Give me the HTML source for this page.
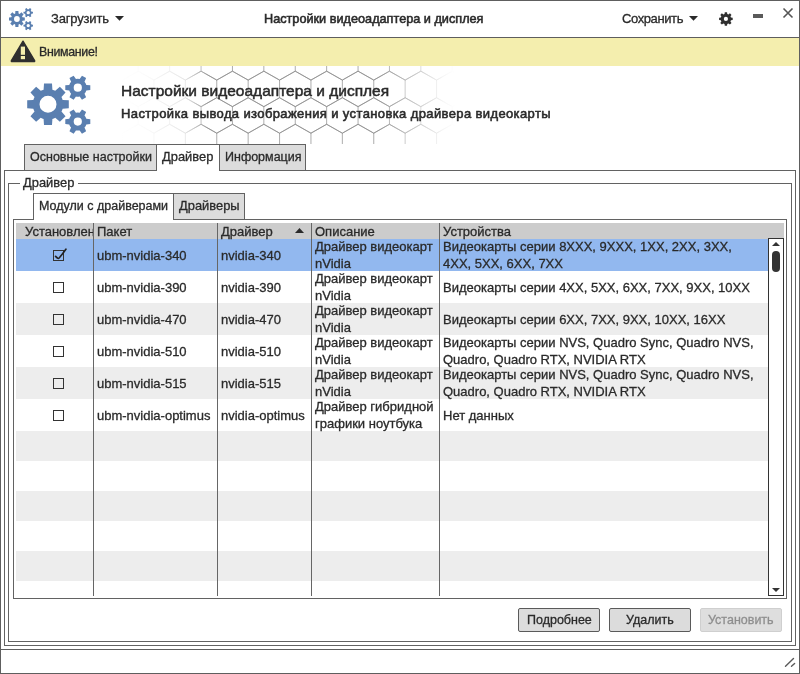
<!DOCTYPE html>
<html><head><meta charset="utf-8">
<style>
*{box-sizing:border-box;margin:0;padding:0}
html,body{width:800px;height:674px;overflow:hidden;background:#fff}
body{font-family:"Liberation Sans",sans-serif;font-size:12.5px;color:#2a2a2a;position:relative;-webkit-text-stroke:0.3px currentColor}
.a{position:absolute}
.t{position:absolute;white-space:nowrap;line-height:1;will-change:transform}
.sb{-webkit-text-stroke:0.55px #2a2a2a}
.bd{border:1px solid #626262}
</style></head><body>
<!-- window border -->
<div class="a" style="left:0;top:0;width:800px;height:674px;border:1px solid #5e5e5e"></div>

<!-- headerbar -->
<div class="a" style="left:1px;top:37px;width:798px;height:1px;background:#5e5e5e"></div>
<svg class="a" style="left:0;top:0" width="800" height="40"><path fill-rule="evenodd" fill="#2f2f2f" d="M730.92 17.60L732.70 17.80L732.70 20.10L730.92 20.30A5.20 5.20 0 0 1 730.41 21.55L730.41 21.55L731.52 22.95L729.90 24.57L728.50 23.46A5.20 5.20 0 0 1 727.25 23.97L727.25 23.97L727.05 25.75L724.75 25.75L724.55 23.97A5.20 5.20 0 0 1 723.30 23.46L723.30 23.46L721.90 24.57L720.28 22.95L721.39 21.55A5.20 5.20 0 0 1 720.88 20.30L720.88 20.30L719.10 20.10L719.10 17.80L720.88 17.60A5.20 5.20 0 0 1 721.39 16.35L721.39 16.35L720.28 14.95L721.90 13.33L723.30 14.44A5.20 5.20 0 0 1 724.55 13.93L724.55 13.93L724.75 12.15L727.05 12.15L727.25 13.93A5.20 5.20 0 0 1 728.50 14.44L728.50 14.44L729.90 13.33L731.52 14.95L730.41 16.35A5.20 5.20 0 0 1 730.92 17.60ZM728.00 18.95A2.10 2.10 0 1 0 723.80 18.95A2.10 2.10 0 1 0 728.00 18.95Z"/></svg>
<svg class="a" style="left:0;top:0" width="100" height="140"><path fill-rule="evenodd" fill="#5a7fb0" d="M62.65 99.90L68.80 100.30L68.80 108.30L62.65 108.70A15.30 15.30 0 0 1 61.47 111.55L61.47 111.55L65.54 116.18L59.88 121.84L55.25 117.77A15.30 15.30 0 0 1 52.40 118.95L52.40 118.95L52.00 125.10L44.00 125.10L43.60 118.95A15.30 15.30 0 0 1 40.75 117.77L40.75 117.77L36.12 121.84L30.46 116.18L34.53 111.55A15.30 15.30 0 0 1 33.35 108.70L33.35 108.70L27.20 108.30L27.20 100.30L33.35 99.90A15.30 15.30 0 0 1 34.53 97.05L34.53 97.05L30.46 92.42L36.12 86.76L40.75 90.83A15.30 15.30 0 0 1 43.60 89.65L43.60 89.65L44.00 83.50L52.00 83.50L52.40 89.65A15.30 15.30 0 0 1 55.25 90.83L55.25 90.83L59.88 86.76L65.54 92.42L61.47 97.05A15.30 15.30 0 0 1 62.65 99.90ZM56.50 104.30A8.50 8.50 0 1 0 39.50 104.30A8.50 8.50 0 1 0 56.50 104.30ZM86.35 84.90L90.30 85.30L90.30 90.10L86.35 90.50A9.00 9.00 0 0 1 84.50 93.71L84.50 93.71L86.13 97.33L81.97 99.73L79.65 96.51A9.00 9.00 0 0 1 75.95 96.51L75.95 96.51L73.63 99.73L69.47 97.33L71.10 93.71A9.00 9.00 0 0 1 69.25 90.50L69.25 90.50L65.30 90.10L65.30 85.30L69.25 84.90A9.00 9.00 0 0 1 71.10 81.69L71.10 81.69L69.47 78.07L73.63 75.67L75.95 78.89A9.00 9.00 0 0 1 79.65 78.89L79.65 78.89L81.97 75.67L86.13 78.07L84.50 81.69A9.00 9.00 0 0 1 86.35 84.90ZM81.90 87.70A4.10 4.10 0 1 0 73.70 87.70A4.10 4.10 0 1 0 81.90 87.70ZM86.35 118.80L90.30 119.20L90.30 124.00L86.35 124.40A9.00 9.00 0 0 1 84.50 127.61L84.50 127.61L86.13 131.23L81.97 133.63L79.65 130.41A9.00 9.00 0 0 1 75.95 130.41L75.95 130.41L73.63 133.63L69.47 131.23L71.10 127.61A9.00 9.00 0 0 1 69.25 124.40L69.25 124.40L65.30 124.00L65.30 119.20L69.25 118.80A9.00 9.00 0 0 1 71.10 115.59L71.10 115.59L69.47 111.97L73.63 109.57L75.95 112.79A9.00 9.00 0 0 1 79.65 112.79L79.65 112.79L81.97 109.57L86.13 111.97L84.50 115.59A9.00 9.00 0 0 1 86.35 118.80ZM81.90 121.60A4.10 4.10 0 1 0 73.70 121.60A4.10 4.10 0 1 0 81.90 121.60Z"/><path fill-rule="evenodd" fill="#5a7fb0" d="M22.47 17.33L24.80 17.48L24.80 20.52L22.47 20.67A5.81 5.81 0 0 1 22.02 21.76L22.02 21.76L23.56 23.51L21.41 25.66L19.66 24.12A5.81 5.81 0 0 1 18.57 24.57L18.57 24.57L18.42 26.90L15.38 26.90L15.23 24.57A5.81 5.81 0 0 1 14.14 24.12L14.14 24.12L12.39 25.66L10.24 23.51L11.78 21.76A5.81 5.81 0 0 1 11.33 20.67L11.33 20.67L9.00 20.52L9.00 17.48L11.33 17.33A5.81 5.81 0 0 1 11.78 16.24L11.78 16.24L10.24 14.49L12.39 12.34L14.14 13.88A5.81 5.81 0 0 1 15.23 13.43L15.23 13.43L15.38 11.10L18.42 11.10L18.57 13.43A5.81 5.81 0 0 1 19.66 13.88L19.66 13.88L21.41 12.34L23.56 14.49L22.02 16.24A5.81 5.81 0 0 1 22.47 17.33ZM19.79 19.00A2.89 2.89 0 1 0 14.01 19.00A2.89 2.89 0 1 0 19.79 19.00ZM31.47 11.63L32.97 11.78L32.97 13.60L31.47 13.76A3.42 3.42 0 0 1 30.77 14.97L30.77 14.97L31.39 16.35L29.81 17.26L28.93 16.04A3.42 3.42 0 0 1 27.52 16.04L27.52 16.04L26.64 17.26L25.06 16.35L25.68 14.97A3.42 3.42 0 0 1 24.97 13.76L24.97 13.76L23.47 13.60L23.47 11.78L24.97 11.63A3.42 3.42 0 0 1 25.68 10.41L25.68 10.41L25.06 9.03L26.64 8.12L27.52 9.35A3.42 3.42 0 0 1 28.93 9.35L28.93 9.35L29.81 8.12L31.39 9.03L30.77 10.41A3.42 3.42 0 0 1 31.47 11.63ZM29.90 12.69A1.67 1.67 0 1 0 26.55 12.69A1.67 1.67 0 1 0 29.90 12.69ZM31.47 24.51L32.97 24.66L32.97 26.49L31.47 26.64A3.42 3.42 0 0 1 30.77 27.86L30.77 27.86L31.39 29.23L29.81 30.14L28.93 28.92A3.42 3.42 0 0 1 27.52 28.92L27.52 28.92L26.64 30.14L25.06 29.23L25.68 27.86A3.42 3.42 0 0 1 24.97 26.64L24.97 26.64L23.47 26.49L23.47 24.66L24.97 24.51A3.42 3.42 0 0 1 25.68 23.29L25.68 23.29L25.06 21.92L26.64 21.00L27.52 22.23A3.42 3.42 0 0 1 28.93 22.23L28.93 22.23L29.81 21.00L31.39 21.92L30.77 23.29A3.42 3.42 0 0 1 31.47 24.51ZM29.90 25.57A1.67 1.67 0 1 0 26.55 25.57A1.67 1.67 0 1 0 29.90 25.57Z"/></svg>

<div class="t" style="left:51px;top:12px;font-size:13px;letter-spacing:-0.17px">Загрузить</div>
<svg class="a" style="left:115px;top:16px" width="9" height="5"><path d="M0 0H9L4.5 4.7Z" fill="#2a2a2a"/></svg>
<div class="t sb" style="left:264px;top:12.5px;font-size:12.7px">Настройки видеоадаптера и дисплея</div>
<div class="t" style="left:622px;top:12px;font-size:13px;letter-spacing:-0.4px">Сохранить</div>
<svg class="a" style="left:689px;top:16px" width="9" height="5"><path d="M0 0H9L4.5 4.7Z" fill="#2a2a2a"/></svg>

<!-- infobar -->
<div class="a" style="left:1px;top:38px;width:798px;height:28px;background:#f4eeae"></div>
<div class="t" style="left:39px;top:46px;font-size:12.4px;letter-spacing:-0.33px">Внимание!</div>

<!-- header -->
<svg class="a" style="left:0;top:66px" width="800" height="78" viewBox="0 66 800 78">
<defs><linearGradient id="hg" x1="120" y1="0" x2="460" y2="0" gradientUnits="userSpaceOnUse">
<stop offset="0" stop-color="#fff" stop-opacity="0"/>
<stop offset="0.08" stop-color="#fff" stop-opacity="0.03"/>
<stop offset="0.19" stop-color="#fff" stop-opacity="0.15"/>
<stop offset="0.26" stop-color="#fff" stop-opacity="0.65"/>
<stop offset="0.76" stop-color="#fff" stop-opacity="0.65"/>
<stop offset="0.88" stop-color="#fff" stop-opacity="0.3"/>
<stop offset="0.95" stop-color="#fff" stop-opacity="0.06"/>
<stop offset="0.985" stop-color="#fff" stop-opacity="0"/>
</linearGradient><mask id="hm" maskUnits="userSpaceOnUse" x="0" y="66" width="800" height="78"><rect x="0" y="66" width="800" height="78" fill="url(#hg)"/></mask></defs>
<path mask="url(#hm)" d="M91.15 26.9L91.15 44.7M91.15 26.9L106.85 18.0M91.15 44.7L106.85 53.6M91.15 80.0L91.15 97.8M91.15 80.0L106.85 71.1M91.15 97.8L106.85 106.7M91.15 133.1L91.15 150.9M91.15 133.1L106.85 124.2M91.15 150.9L106.85 159.8M106.85 18.0L122.55 26.9M106.85 53.45L106.85 71.25M106.85 53.45L122.55 44.55M106.85 53.6L122.55 44.7M106.85 71.1L122.55 80.0M106.85 71.25L122.55 80.15M106.85 106.55L106.85 124.35M106.85 106.55L122.55 97.65M106.85 106.7L122.55 97.8M106.85 124.2L122.55 133.1M106.85 124.35L122.55 133.25M106.85 159.65L106.85 177.45M106.85 159.65L122.55 150.75M106.85 159.8L122.55 150.9M106.85 177.45L122.55 186.35M122.55 26.9L122.55 44.7M122.55 26.9L138.25 18.0M122.55 44.55L138.25 53.45M122.55 44.7L138.25 53.6M122.55 80.0L122.55 97.8M122.55 80.0L138.25 71.1M122.55 80.15L138.25 71.25M122.55 97.65L138.25 106.55M122.55 97.8L138.25 106.7M122.55 133.1L122.55 150.9M122.55 133.1L138.25 124.2M122.55 133.25L138.25 124.35M122.55 150.75L138.25 159.65M122.55 150.9L138.25 159.8M122.55 186.35L138.25 177.45M138.25 18.0L153.95 26.9M138.25 53.45L138.25 71.25M138.25 53.45L153.95 44.55M138.25 53.6L153.95 44.7M138.25 71.1L153.95 80.0M138.25 71.25L153.95 80.15M138.25 106.55L138.25 124.35M138.25 106.55L153.95 97.65M138.25 106.7L153.95 97.8M138.25 124.2L153.95 133.1M138.25 124.35L153.95 133.25M138.25 159.65L138.25 177.45M138.25 159.65L153.95 150.75M138.25 159.8L153.95 150.9M138.25 177.45L153.95 186.35M153.95 26.9L153.95 44.7M153.95 26.9L169.65 18.0M153.95 44.55L169.65 53.45M153.95 44.7L169.65 53.6M153.95 80.0L153.95 97.8M153.95 80.0L169.65 71.1M153.95 80.15L169.65 71.25M153.95 97.65L169.65 106.55M153.95 97.8L169.65 106.7M153.95 133.1L153.95 150.9M153.95 133.1L169.65 124.2M153.95 133.25L169.65 124.35M153.95 150.75L169.65 159.65M153.95 150.9L169.65 159.8M153.95 186.35L169.65 177.45M169.65 18.0L185.35 26.9M169.65 53.45L169.65 71.25M169.65 53.45L185.35 44.55M169.65 53.6L185.35 44.7M169.65 71.1L185.35 80.0M169.65 71.25L185.35 80.15M169.65 106.55L169.65 124.35M169.65 106.55L185.35 97.65M169.65 106.7L185.35 97.8M169.65 124.2L185.35 133.1M169.65 124.35L185.35 133.25M169.65 159.65L169.65 177.45M169.65 159.65L185.35 150.75M169.65 159.8L185.35 150.9M169.65 177.45L185.35 186.35M185.35 26.9L185.35 44.7M185.35 26.9L201.05 18.0M185.35 44.55L201.05 53.45M185.35 44.7L201.05 53.6M185.35 80.0L185.35 97.8M185.35 80.0L201.05 71.1M185.35 80.15L201.05 71.25M185.35 97.65L201.05 106.55M185.35 97.8L201.05 106.7M185.35 133.1L185.35 150.9M185.35 133.1L201.05 124.2M185.35 133.25L201.05 124.35M185.35 150.75L201.05 159.65M185.35 150.9L201.05 159.8M185.35 186.35L201.05 177.45M201.05 18.0L216.75 26.9M201.05 53.45L201.05 71.25M201.05 53.45L216.75 44.55M201.05 53.6L216.75 44.7M201.05 71.1L216.75 80.0M201.05 71.25L216.75 80.15M201.05 106.55L201.05 124.35M201.05 106.55L216.75 97.65M201.05 106.7L216.75 97.8M201.05 124.2L216.75 133.1M201.05 124.35L216.75 133.25M201.05 159.65L201.05 177.45M201.05 159.65L216.75 150.75M201.05 159.8L216.75 150.9M201.05 177.45L216.75 186.35M216.75 26.9L216.75 44.7M216.75 26.9L232.45 18.0M216.75 44.55L232.45 53.45M216.75 44.7L232.45 53.6M216.75 80.0L216.75 97.8M216.75 80.0L232.45 71.1M216.75 80.15L232.45 71.25M216.75 97.65L232.45 106.55M216.75 97.8L232.45 106.7M216.75 133.1L216.75 150.9M216.75 133.1L232.45 124.2M216.75 133.25L232.45 124.35M216.75 150.75L232.45 159.65M216.75 150.9L232.45 159.8M216.75 186.35L232.45 177.45M232.45 18.0L248.15 26.9M232.45 53.45L232.45 71.25M232.45 53.45L248.15 44.55M232.45 53.6L248.15 44.7M232.45 71.1L248.15 80.0M232.45 71.25L248.15 80.15M232.45 106.55L232.45 124.35M232.45 106.55L248.15 97.65M232.45 106.7L248.15 97.8M232.45 124.2L248.15 133.1M232.45 124.35L248.15 133.25M232.45 159.65L232.45 177.45M232.45 159.65L248.15 150.75M232.45 159.8L248.15 150.9M232.45 177.45L248.15 186.35M248.15 26.9L248.15 44.7M248.15 26.9L263.85 18.0M248.15 44.55L263.85 53.45M248.15 44.7L263.85 53.6M248.15 80.0L248.15 97.8M248.15 80.0L263.85 71.1M248.15 80.15L263.85 71.25M248.15 97.65L263.85 106.55M248.15 97.8L263.85 106.7M248.15 133.1L248.15 150.9M248.15 133.1L263.85 124.2M248.15 133.25L263.85 124.35M248.15 150.75L263.85 159.65M248.15 150.9L263.85 159.8M248.15 186.35L263.85 177.45M263.85 18.0L279.55 26.9M263.85 53.45L263.85 71.25M263.85 53.45L279.55 44.55M263.85 53.6L279.55 44.7M263.85 71.1L279.55 80.0M263.85 71.25L279.55 80.15M263.85 106.55L263.85 124.35M263.85 106.55L279.55 97.65M263.85 106.7L279.55 97.8M263.85 124.2L279.55 133.1M263.85 124.35L279.55 133.25M263.85 159.65L263.85 177.45M263.85 159.65L279.55 150.75M263.85 159.8L279.55 150.9M263.85 177.45L279.55 186.35M279.55 26.9L279.55 44.7M279.55 26.9L295.25 18.0M279.55 44.55L295.25 53.45M279.55 44.7L295.25 53.6M279.55 80.0L279.55 97.8M279.55 80.0L295.25 71.1M279.55 80.15L295.25 71.25M279.55 97.65L295.25 106.55M279.55 97.8L295.25 106.7M279.55 133.1L279.55 150.9M279.55 133.1L295.25 124.2M279.55 133.25L295.25 124.35M279.55 150.75L295.25 159.65M279.55 150.9L295.25 159.8M279.55 186.35L295.25 177.45M295.25 18.0L310.95 26.9M295.25 53.45L295.25 71.25M295.25 53.45L310.95 44.55M295.25 53.6L310.95 44.7M295.25 71.1L310.95 80.0M295.25 71.25L310.95 80.15M295.25 106.55L295.25 124.35M295.25 106.55L310.95 97.65M295.25 106.7L310.95 97.8M295.25 124.2L310.95 133.1M295.25 124.35L310.95 133.25M295.25 159.65L295.25 177.45M295.25 159.65L310.95 150.75M295.25 159.8L310.95 150.9M295.25 177.45L310.95 186.35M310.95 26.9L310.95 44.7M310.95 26.9L326.65 18.0M310.95 44.55L326.65 53.45M310.95 44.7L326.65 53.6M310.95 80.0L310.95 97.8M310.95 80.0L326.65 71.1M310.95 80.15L326.65 71.25M310.95 97.65L326.65 106.55M310.95 97.8L326.65 106.7M310.95 133.1L310.95 150.9M310.95 133.1L326.65 124.2M310.95 133.25L326.65 124.35M310.95 150.75L326.65 159.65M310.95 150.9L326.65 159.8M310.95 186.35L326.65 177.45M326.65 18.0L342.35 26.9M326.65 53.45L326.65 71.25M326.65 53.45L342.35 44.55M326.65 53.6L342.35 44.7M326.65 71.1L342.35 80.0M326.65 71.25L342.35 80.15M326.65 106.55L326.65 124.35M326.65 106.55L342.35 97.65M326.65 106.7L342.35 97.8M326.65 124.2L342.35 133.1M326.65 124.35L342.35 133.25M326.65 159.65L326.65 177.45M326.65 159.65L342.35 150.75M326.65 159.8L342.35 150.9M326.65 177.45L342.35 186.35M342.35 26.9L342.35 44.7M342.35 26.9L358.05 18.0M342.35 44.55L358.05 53.45M342.35 44.7L358.05 53.6M342.35 80.0L342.35 97.8M342.35 80.0L358.05 71.1M342.35 80.15L358.05 71.25M342.35 97.65L358.05 106.55M342.35 97.8L358.05 106.7M342.35 133.1L342.35 150.9M342.35 133.1L358.05 124.2M342.35 133.25L358.05 124.35M342.35 150.75L358.05 159.65M342.35 150.9L358.05 159.8M342.35 186.35L358.05 177.45M358.05 18.0L373.75 26.9M358.05 53.45L358.05 71.25M358.05 53.45L373.75 44.55M358.05 53.6L373.75 44.7M358.05 71.1L373.75 80.0M358.05 71.25L373.75 80.15M358.05 106.55L358.05 124.35M358.05 106.55L373.75 97.65M358.05 106.7L373.75 97.8M358.05 124.2L373.75 133.1M358.05 124.35L373.75 133.25M358.05 159.65L358.05 177.45M358.05 159.65L373.75 150.75M358.05 159.8L373.75 150.9M358.05 177.45L373.75 186.35M373.75 26.9L373.75 44.7M373.75 26.9L389.45 18.0M373.75 44.55L389.45 53.45M373.75 44.7L389.45 53.6M373.75 80.0L373.75 97.8M373.75 80.0L389.45 71.1M373.75 80.15L389.45 71.25M373.75 97.65L389.45 106.55M373.75 97.8L389.45 106.7M373.75 133.1L373.75 150.9M373.75 133.1L389.45 124.2M373.75 133.25L389.45 124.35M373.75 150.75L389.45 159.65M373.75 150.9L389.45 159.8M373.75 186.35L389.45 177.45M389.45 18.0L405.15 26.9M389.45 53.45L389.45 71.25M389.45 53.45L405.15 44.55M389.45 53.6L405.15 44.7M389.45 71.1L405.15 80.0M389.45 71.25L405.15 80.15M389.45 106.55L389.45 124.35M389.45 106.55L405.15 97.65M389.45 106.7L405.15 97.8M389.45 124.2L405.15 133.1M389.45 124.35L405.15 133.25M389.45 159.65L389.45 177.45M389.45 159.65L405.15 150.75M389.45 159.8L405.15 150.9M389.45 177.45L405.15 186.35M405.15 26.9L405.15 44.7M405.15 26.9L420.85 18.0M405.15 44.55L420.85 53.45M405.15 44.7L420.85 53.6M405.15 80.0L405.15 97.8M405.15 80.0L420.85 71.1M405.15 80.15L420.85 71.25M405.15 97.65L420.85 106.55M405.15 97.8L420.85 106.7M405.15 133.1L405.15 150.9M405.15 133.1L420.85 124.2M405.15 133.25L420.85 124.35M405.15 150.75L420.85 159.65M405.15 150.9L420.85 159.8M405.15 186.35L420.85 177.45M420.85 18.0L436.55 26.9M420.85 53.45L420.85 71.25M420.85 53.45L436.55 44.55M420.85 53.6L436.55 44.7M420.85 71.1L436.55 80.0M420.85 71.25L436.55 80.15M420.85 106.55L420.85 124.35M420.85 106.55L436.55 97.65M420.85 106.7L436.55 97.8M420.85 124.2L436.55 133.1M420.85 124.35L436.55 133.25M420.85 159.65L420.85 177.45M420.85 159.65L436.55 150.75M420.85 159.8L436.55 150.9M420.85 177.45L436.55 186.35M436.55 26.9L436.55 44.7M436.55 26.9L452.25 18.0M436.55 44.55L452.25 53.45M436.55 44.7L452.25 53.6M436.55 80.0L436.55 97.8M436.55 80.0L452.25 71.1M436.55 80.15L452.25 71.25M436.55 97.65L452.25 106.55M436.55 97.8L452.25 106.7M436.55 133.1L436.55 150.9M436.55 133.1L452.25 124.2M436.55 133.25L452.25 124.35M436.55 150.75L452.25 159.65M436.55 150.9L452.25 159.8M436.55 186.35L452.25 177.45M452.25 18.0L467.95 26.9M452.25 53.45L452.25 71.25M452.25 53.45L467.95 44.55M452.25 53.6L467.95 44.7M452.25 71.1L467.95 80.0M452.25 71.25L467.95 80.15M452.25 106.55L452.25 124.35M452.25 106.55L467.95 97.65M452.25 106.7L467.95 97.8M452.25 124.2L467.95 133.1M452.25 124.35L467.95 133.25M452.25 159.65L452.25 177.45M452.25 159.65L467.95 150.75M452.25 159.8L467.95 150.9M452.25 177.45L467.95 186.35M467.95 26.9L467.95 44.7M467.95 44.55L483.65 53.45M467.95 80.0L467.95 97.8M467.95 80.15L483.65 71.25M467.95 97.65L483.65 106.55M467.95 133.1L467.95 150.9M467.95 133.25L483.65 124.35M467.95 150.75L483.65 159.65M467.95 186.35L483.65 177.45M483.65 53.45L483.65 71.25M483.65 106.55L483.65 124.35M483.65 159.65L483.65 177.45" stroke="#4a4a4a" stroke-width="0.7" fill="none"/></svg>

<div class="t sb" style="left:121px;top:83px;font-size:15.5px;-webkit-text-stroke:0.5px #2a2a2a">Настройки видеоадаптера и дисплея</div>
<div class="t sb" style="left:121px;top:107px;font-size:13px;letter-spacing:0.38px;-webkit-text-stroke:0.55px #2a2a2a">Настройка вывода изображения и установка драйвера видеокарты</div>

<!-- outer notebook -->
<div class="a bd" style="left:4px;top:170px;width:792px;height:476px"></div>
<div class="a bd" style="left:24px;top:144px;width:133px;height:27px;background:#dcdcdc"></div>
<div class="a" style="left:156px;top:144px;width:64px;height:27px;border:1px solid #626262;border-bottom:none;background:#fff"></div>
<div class="a bd" style="left:219px;top:144px;width:87px;height:27px;background:#dcdcdc"></div>
<div class="t" style="left:30px;top:151px">Основные настройки</div>
<div class="t" style="left:162px;top:151px;font-size:12.9px">Драйвер</div>
<div class="t" style="left:225px;top:151px">Информация</div>

<!-- frame -->
<div class="a bd" style="left:8px;top:183px;width:784px;height:459px"></div>
<div class="a" style="left:20px;top:176px;width:58px;height:14px;background:#fff"></div>
<div class="t" style="left:23px;top:177px;font-size:12.9px">Драйвер</div>

<!-- inner notebook -->
<div class="a bd" style="left:13px;top:219px;width:774px;height:380px"></div>
<div class="a" style="left:33px;top:193px;width:141px;height:27px;border:1px solid #626262;border-bottom:none;background:#fff"></div>
<div class="a bd" style="left:173px;top:193px;width:72px;height:27px;background:#dcdcdc"></div>
<div class="t" style="left:39px;top:200px">Модули с драйверами</div>
<div class="t" style="left:179px;top:200px;font-size:12.9px">Драйверы</div>

<!-- tree --><div class="a" style="left:0;top:0;width:800px;height:674px;font-size:13px">
<div class="a" style="left:16px;top:223px;width:768px;height:16px;background:#cccccc"></div>
<div class="a" style="left:16px;top:239px;width:752px;height:32px;background:#92b8ef"></div>
<div class="a" style="left:16px;top:303px;width:752px;height:32px;background:#ededed"></div>
<div class="a" style="left:16px;top:367px;width:752px;height:32px;background:#ededed"></div>
<div class="a" style="left:16px;top:431px;width:752px;height:30px;background:#ededed"></div>
<div class="a" style="left:16px;top:491px;width:752px;height:30px;background:#ededed"></div>
<div class="a" style="left:16px;top:551px;width:752px;height:30px;background:#ededed"></div>
<div class="a" style="left:93px;top:223px;width:1px;height:373px;background:#666"></div>
<div class="a" style="left:217px;top:223px;width:1px;height:373px;background:#666"></div>
<div class="a" style="left:311px;top:223px;width:1px;height:373px;background:#666"></div>
<div class="a" style="left:439px;top:223px;width:1px;height:373px;background:#666"></div>
<div class="a" style="left:16px;top:223px;width:77px;height:16px;overflow:hidden"><div class="t" style="left:8.5px;top:1.5px">Установлен</div></div>
<div class="t" style="left:97px;top:224.5px">Пакет</div>
<div class="t" style="left:221px;top:224.5px">Драйвер</div>
<div class="t" style="left:315px;top:224.5px">Описание</div>
<div class="t" style="left:443px;top:224.5px">Устройства</div>
<svg class="a" style="left:295px;top:228px" width="9" height="5"><path d="M4.5 0L9 5H0Z" fill="#2a2a2a"/></svg>
<div class="a" style="left:53px;top:250px;width:11px;height:11px;border:1px solid #333"></div>
<svg class="a" style="left:53px;top:246px" width="14" height="15"><path d="M2.6 10.4Q4.6 12.6 5.4 12.5Q6.2 12.4 12.9 3.2" fill="none" stroke="#222" stroke-width="1.7" stroke-linecap="round"/></svg>
<div class="t" style="left:97px;top:248.5px">ubm-nvidia-340</div>
<div class="t" style="left:221px;top:248.5px">nvidia-340</div>
<div class="t" style="left:315px;top:240px">Драйвер видеокарт</div>
<div class="t" style="left:315px;top:256.5px">nVidia</div>
<div class="t" style="left:443px;top:240px">Видеокарты серии 8XXX, 9XXX, 1XX, 2XX, 3XX,</div>
<div class="t" style="left:443px;top:256.5px">4XX, 5XX, 6XX, 7XX</div>
<div class="a" style="left:53px;top:282px;width:11px;height:11px;border:1px solid #333"></div>
<div class="t" style="left:97px;top:280.5px">ubm-nvidia-390</div>
<div class="t" style="left:221px;top:280.5px">nvidia-390</div>
<div class="t" style="left:315px;top:272px">Драйвер видеокарт</div>
<div class="t" style="left:315px;top:288.5px">nVidia</div>
<div class="t" style="left:443px;top:280.5px">Видеокарты серии 4XX, 5XX, 6XX, 7XX, 9XX, 10XX</div>
<div class="a" style="left:53px;top:314px;width:11px;height:11px;border:1px solid #333"></div>
<div class="t" style="left:97px;top:312.5px">ubm-nvidia-470</div>
<div class="t" style="left:221px;top:312.5px">nvidia-470</div>
<div class="t" style="left:315px;top:304px">Драйвер видеокарт</div>
<div class="t" style="left:315px;top:320.5px">nVidia</div>
<div class="t" style="left:443px;top:312.5px">Видеокарты серии 6XX, 7XX, 9XX, 10XX, 16XX</div>
<div class="a" style="left:53px;top:346px;width:11px;height:11px;border:1px solid #333"></div>
<div class="t" style="left:97px;top:344.5px">ubm-nvidia-510</div>
<div class="t" style="left:221px;top:344.5px">nvidia-510</div>
<div class="t" style="left:315px;top:336px">Драйвер видеокарт</div>
<div class="t" style="left:315px;top:352.5px">nVidia</div>
<div class="t" style="left:443px;top:336px">Видеокарты серии NVS, Quadro Sync, Quadro NVS,</div>
<div class="t" style="left:443px;top:352.5px">Quadro, Quadro RTX, NVIDIA RTX</div>
<div class="a" style="left:53px;top:378px;width:11px;height:11px;border:1px solid #333"></div>
<div class="t" style="left:97px;top:376.5px">ubm-nvidia-515</div>
<div class="t" style="left:221px;top:376.5px">nvidia-515</div>
<div class="t" style="left:315px;top:368px">Драйвер видеокарт</div>
<div class="t" style="left:315px;top:384.5px">nVidia</div>
<div class="t" style="left:443px;top:368px">Видеокарты серии NVS, Quadro Sync, Quadro NVS,</div>
<div class="t" style="left:443px;top:384.5px">Quadro, Quadro RTX, NVIDIA RTX</div>
<div class="a" style="left:53px;top:410px;width:11px;height:11px;border:1px solid #333"></div>
<div class="t" style="left:97px;top:408.5px">ubm-nvidia-optimus</div>
<div class="t" style="left:221px;top:408.5px">nvidia-optimus</div>
<div class="t" style="left:315px;top:400px">Драйвер гибридной</div>
<div class="t" style="left:315px;top:416.5px">графики ноутбука</div>
<div class="t" style="left:443px;top:408.5px">Нет данных</div>
<div class="a" style="left:768px;top:238px;width:16px;height:358px;border:1px solid #333;background:#fff"></div>
<svg class="a" style="left:772px;top:242px" width="8" height="4"><path d="M4 0L8 4H0Z" fill="#333"/></svg>
<div class="a" style="left:772px;top:251px;width:8px;height:21px;border-radius:4px;background:#333"></div>
<svg class="a" style="left:772px;top:588px" width="8" height="4"><path d="M0 0H8L4 4Z" fill="#333"/></svg>
</div>

<!-- buttons -->
<div class="a" style="left:518px;top:608px;width:82px;height:24px;border:1px solid #5a5a5a;border-radius:2px;background:#dcdcdc"></div>
<div class="a" style="left:609px;top:608px;width:82px;height:24px;border:1px solid #5a5a5a;border-radius:2px;background:#dcdcdc"></div>
<div class="a" style="left:700px;top:608px;width:82px;height:24px;border:1px solid #cfcfcf;border-radius:2px;background:#dedede"></div>
<div class="t" style="left:527px;top:614px">Подробнее</div>
<div class="t" style="left:626px;top:614px">Удалить</div>
<div class="t" style="left:708px;top:614px;color:#8e8e8e">Установить</div>

<!-- warning icon -->
<svg class="a" style="left:10px;top:39px" width="26" height="24" viewBox="0 0 26 24">
<path d="M13 2.2L24.6 21.6Q25 22.5 24 22.5H2Q1 22.5 1.4 21.6Z" fill="#2f2f2f" stroke="#2f2f2f" stroke-width="1.4" stroke-linejoin="round"/>
<rect x="10.8" y="7.6" width="4.2" height="8.2" fill="#f4eeae"/>
<rect x="10.8" y="17" width="4.2" height="3.2" fill="#f4eeae"/>
</svg>
<!-- minimize -->
<div class="a" style="left:753px;top:14px;width:10px;height:4px;background:#5a5a5a"></div>
<!-- close -->
<svg class="a" style="left:782px;top:7px" width="12" height="12" viewBox="0 0 12 12"><path d="M1.5 1.5L10.5 10.5M10.5 1.5L1.5 10.5" stroke="#555" stroke-width="1.6"/></svg>
<!-- resize grip -->
<svg class="a" style="left:782px;top:656px" width="14" height="13" viewBox="0 0 14 13"><path d="M3.5 10.3L11.5 2.6M9.5 10.3L12.6 7.5" stroke="#5a5a5a" stroke-width="1.4" stroke-linecap="round"/></svg>

<!-- statusbar -->
<div class="a" style="left:1px;top:649px;width:798px;height:1px;background:#5e5e5e"></div>
</body></html>
